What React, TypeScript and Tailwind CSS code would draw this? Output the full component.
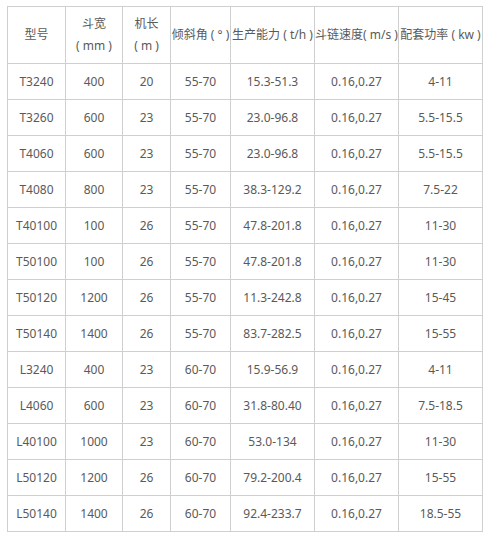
import React from "react";

const rows: string[][] = [
  ["T3240", "400", "20", "55-70", "15.3-51.3", "0.16,0.27", "4-11"],
  ["T3260", "600", "23", "55-70", "23.0-96.8", "0.16,0.27", "5.5-15.5"],
  ["T4060", "600", "23", "55-70", "23.0-96.8", "0.16,0.27", "5.5-15.5"],
  ["T4080", "800", "23", "55-70", "38.3-129.2", "0.16,0.27", "7.5-22"],
  ["T40100", "100", "26", "55-70", "47.8-201.8", "0.16,0.27", "11-30"],
  ["T50100", "100", "26", "55-70", "47.8-201.8", "0.16,0.27", "11-30"],
  ["T50120", "1200", "26", "55-70", "11.3-242.8", "0.16,0.27", "15-45"],
  ["T50140", "1400", "26", "55-70", "83.7-282.5", "0.16,0.27", "15-55"],
  ["L3240", "400", "23", "60-70", "15.9-56.9", "0.16,0.27", "4-11"],
  ["L4060", "600", "23", "60-70", "31.8-80.40", "0.16,0.27", "7.5-18.5"],
  ["L40100", "1000", "23", "60-70", "53.0-134", "0.16,0.27", "11-30"],
  ["L50120", "1200", "26", "60-70", "79.2-200.4", "0.16,0.27", "15-55"],
  ["L50140", "1400", "26", "60-70", "92.4-233.7", "0.16,0.27", "18.5-55"],
];

const headers: React.ReactNode[] = [
  "型号",
  <>
    <div>斗宽</div>
    <div>( mm )</div>
  </>,
  <>
    <div>机长</div>
    <div>( m )</div>
  </>,
  "倾斜角 ( ° )",
  "生产能力 ( t/h )",
  "斗链速度( m/s )",
  "配套功率 ( kw )",
];

export default function App() {
  return (
    <div
      className="bg-white w-[491px] h-[536px] pt-[6px] pl-[7px] text-[12px] text-[#5a5a5a]"
      style={{ fontFamily: '"Noto Sans", "Noto Sans CJK SC", sans-serif' }}
    >
      <div className="grid grid-cols-[58px_57px_48px_60px_84px_84px_84px] w-[476px] border-l border-t border-[#cfcfcf]">
        {headers.map((h, i) => (
          <div
            key={`h${i}`}
            className="h-[57px] border-r border-b border-[#cfcfcf] flex flex-col justify-center text-center whitespace-nowrap leading-[22px]"
          >
            {h}
          </div>
        ))}
        {rows.map((r, ri) =>
          r.map((c, ci) => (
            <div
              key={`${ri}-${ci}`}
              className="h-[36px] border-r border-b border-[#cfcfcf] flex items-center justify-center whitespace-nowrap"
            >
              {c}
            </div>
          ))
        )}
      </div>
    </div>
  );
}
